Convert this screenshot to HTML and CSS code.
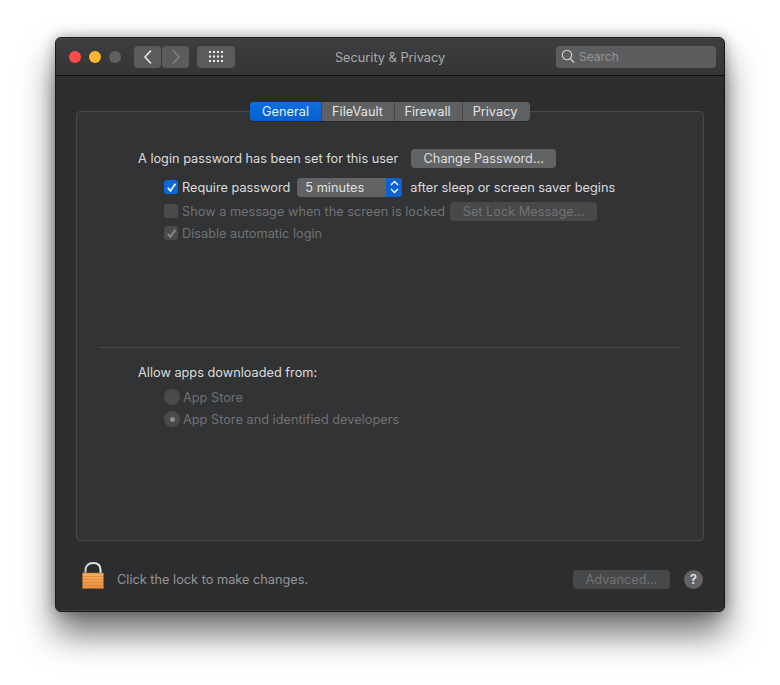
FILE: index.html
```html
<!DOCTYPE html>
<html lang="en">
<head>
<meta charset="utf-8">
<title>Security &amp; Privacy</title>
<link rel="stylesheet" href="styles.css">
</head>
<body>
<div class="window">
  <header class="titlebar">
    <div class="lights">
      <span class="light red"></span>
      <span class="light yellow"></span>
      <span class="light gray"></span>
    </div>
    <div class="nav">
      <span class="navbtn"><svg width="10" height="16" viewBox="0 0 10 16"><path d="M8 1.5 L2 8 L8 14.5" fill="none" stroke="#e8e8e8" stroke-width="1.6"/></svg></span>
      <span class="navbtn"><svg width="10" height="16" viewBox="0 0 10 16"><path d="M2 1.5 L8 8 L2 14.5" fill="none" stroke="#808082" stroke-width="1.6"/></svg></span>
    </div>
    <span class="gridbtn">
      <svg width="15" height="13" viewBox="0 0 15 13" fill="#f0f0f0">
        <rect x="0" y="0" width="2" height="2"/><rect x="4" y="0" width="2" height="2"/><rect x="8" y="0" width="2" height="2"/><rect x="12" y="0" width="2" height="2"/>
        <rect x="0" y="4.5" width="2" height="2"/><rect x="4" y="4.5" width="2" height="2"/><rect x="8" y="4.5" width="2" height="2"/><rect x="12" y="4.5" width="2" height="2"/>
        <rect x="0" y="9" width="2" height="2"/><rect x="4" y="9" width="2" height="2"/><rect x="8" y="9" width="2" height="2"/><rect x="12" y="9" width="2" height="2"/>
      </svg>
    </span>
    <h1 class="title">Security &amp; Privacy</h1>
    <div class="search">
      <svg width="14" height="15" viewBox="0 0 14 15"><circle cx="6" cy="6" r="4.7" fill="none" stroke="#d8d8d8" stroke-width="1.1"/><path d="M9.4 9.6 L13 13.6" stroke="#d8d8d8" stroke-width="1.3" fill="none"/></svg>
      <span class="search-text">Search</span>
    </div>
  </header>

  <main class="body">
    <section class="panel">
      <nav class="tabs">
        <span class="tab active">General</span>
        <span class="tab t2">FileVault</span>
        <span class="tab t3">Firewall</span>
        <span class="tab t4">Privacy</span>
      </nav>

      <div class="top">
        <div class="row row-login">
          <span class="label">A login password has been set for this user</span>
          <span class="btn btn-change">Change Password...</span>
        </div>
        <div class="row row-require">
          <span class="check on"><svg width="11" height="11" viewBox="0 0 11 11"><path d="M1.8 5.8 L4.4 8.8 L9.4 1.8" fill="none" stroke="#fff" stroke-width="1.7"/></svg></span>
          <span class="label">Require password</span>
          <span class="select">
            <span class="select-value">5 minutes</span>
            <span class="select-arrows"><svg width="9" height="14" viewBox="0 0 9 14"><path d="M1 5 L4.5 1.5 L8 5 M1 9 L4.5 12.5 L8 9" fill="none" stroke="#fff" stroke-width="1.3"/></svg></span>
          </span>
          <span class="label">after sleep or screen saver begins</span>
        </div>
        <div class="row row-message">
          <span class="check off"></span>
          <span class="label dim">Show a message when the screen is locked</span>
          <span class="btn btn-disabled btn-lockmsg">Set Lock Message...</span>
        </div>
        <div class="row row-auto">
          <span class="check off"><svg width="11" height="11" viewBox="0 0 11 11"><path d="M1.8 5.8 L4.4 8.8 L9.4 1.8" fill="none" stroke="#8b8c8e" stroke-width="1.7"/></svg></span>
          <span class="label dim">Disable automatic login</span>
        </div>
      </div>

      <hr class="divider">

      <div class="bottom">
        <div class="row"><span class="label">Allow apps downloaded from:</span></div>
        <div class="row row-radio first">
          <span class="radio"></span>
          <span class="label dim">App Store</span>
        </div>
        <div class="row row-radio">
          <span class="radio selected"></span>
          <span class="label dim">App Store and identified developers</span>
        </div>
      </div>
    </section>

    <footer class="footer">
      <svg class="lock" width="22" height="27" viewBox="0 0 22 27">
        <defs>
          <linearGradient id="shackle" x1="0" x2="1" y1="0" y2="0"><stop offset="0" stop-color="#c9d3da"/><stop offset="1" stop-color="#eef1f3"/></linearGradient>
          <linearGradient id="lockbody" x1="0" x2="0" y1="0" y2="1"><stop offset="0" stop-color="#f5b063"/><stop offset="1" stop-color="#ea8e3c"/></linearGradient>
        </defs>
        <path d="M3.5 11 V8 C3.5 3.6 6.5 1.1 11 1.1 C15.5 1.1 18.5 3.6 18.5 8 V11" fill="none" stroke="url(#shackle)" stroke-width="2"/>
        <rect x="0.5" y="11" width="21" height="15.5" fill="url(#lockbody)" stroke="#a8612a" stroke-width="0.6"/>
        <path d="M1 14.5 H21 M1 17.5 H21 M1 20.5 H21 M1 23.5 H21" stroke="#d98334" stroke-width="0.7"/>
      </svg>
      <span class="lock-text">Click the lock to make changes.</span>
      <span class="btn btn-disabled btn-advanced">Advanced...</span>
      <span class="help">?</span>
    </footer>
  </main>
</div>
</body>
</html>
```
FILE: styles.css
```css
* { box-sizing: border-box; }
html, body { margin: 0; padding: 0; }
body {
  width: 780px;
  height: 685px;
  overflow: hidden;
  background: #fff;
  font-family: Inter, "Liberation Sans", sans-serif;
  font-size: 12.75px;
  color: #dedede;
  padding: 37px 55px 0 55px;
}
.window {
  width: 670px;
  height: 575px;
  display: flex;
  flex-direction: column;
  background: #2c2d2f;
  border: 1px solid #1a1a1b;
  border-radius: 6px;
  box-shadow: 0 22px 34px rgba(0,0,0,.55), 0 0 14px rgba(0,0,0,.32), inset 0 -1px 0 #3e3f41;
  overflow: hidden;
}
.titlebar {
  height: 38px;
  flex: none;
  display: flex;
  align-items: center;
  padding: 0 8px 0 13px;
  background: linear-gradient(#3d3e40, #343537);
  border-bottom: 1px solid #0e0e0f;
  box-shadow: inset 0 1px 0 #4a4b4d;
}
.lights { display: flex; gap: 8px; width: 65px; flex: none; }
.light { width: 12px; height: 12px; border-radius: 50%; }
.red { background: #fb4c46; }
.yellow { background: #fdb631; }
.gray { background: #5f6062; }
.nav { display: flex; gap: 1px; flex: none; }
.navbtn, .gridbtn, .search { background: #5a5b5d; border-radius: 4px; height: 22px; }
.navbtn { width: 27px; display: flex; align-items: center; justify-content: center; }
.gridbtn { width: 38px; margin-left: 8px; display: flex; align-items: center; justify-content: center; flex: none; }
.gridbtn svg { margin-left: 1px; margin-top: 1px; }
.title {
  flex: 1;
  margin: 0;
  padding: 1px 11px 0 0;
  text-align: center;
  font-size: 12.75px;
  font-weight: 400;
  color: #a9aaab;
}
.search {
  width: 160px;
  flex: none;
  display: flex;
  align-items: center;
  gap: 4px;
  padding-left: 5px;
  background: #5c5d5f;
}
.search-text { color: #949596; font-size: 12px; }
.body {
  flex: 1;
  display: flex;
  flex-direction: column;
  padding: 35px 20px 0 20px;
}
.panel {
  height: 430px;
  flex: none;
  background: #323335;
  border: 1px solid #48494b;
  border-radius: 4px;
  padding-left: 61px;
}
.tabs {
  display: flex;
  width: 280px;
  height: 19px;
  margin: -10px 0 0 112px;
  border-radius: 4px;
  overflow: hidden;
  background: #5f6062;
  box-shadow: 0 1px 0 rgba(0,0,0,.2);
}
.tab {
  display: flex;
  align-items: center;
  justify-content: center;
  color: #e4e4e4;
  border-left: 1px solid #47484a;
}
.tab.active { width: 71px; border-left: none; background: linear-gradient(#0a6fe0, #0560cc); color: #e6f0fc; }
.t2 { width: 73px; padding-right: 1px; }
.t3 { width: 68px; padding-right: 2px; }
.t4 { width: 68px; padding-right: 3px; }
.top { padding-top: 27px; height: 226px; }
.row { display: flex; align-items: center; white-space: nowrap; }
.row-login { height: 20px; }
.row-require { height: 20px; margin-top: 9px; padding-left: 26px; }
.row-message { height: 20px; margin-top: 4px; padding-left: 26px; }
.row-auto { height: 20px; margin-top: 2px; padding-left: 26px; }
.label { color: #dcdcdc; }
.dim { color: #717274; }
.btn {
  display: flex;
  align-items: center;
  justify-content: center;
  height: 19px;
  border-radius: 4px;
  background: #626365;
  color: #dfdfdf;
}
.btn-change { width: 145px; margin-left: 13px; }
.btn-disabled { background: #47484a; color: #717274; }
.btn-lockmsg { width: 147px; margin-left: 5px; }
.btn-advanced { width: 97px; margin-left: auto; }
.check {
  width: 14px;
  height: 14px;
  border-radius: 3px;
  margin-right: 4px;
  display: flex;
  align-items: center;
  justify-content: center;
  flex: none;
}
.check.on { background: #0a68d8; }
.check.off { background: #4a4b4d; }
.select {
  display: flex;
  width: 105px;
  height: 19px;
  margin: 0 8px 0 7px;
  border-radius: 4px;
  overflow: hidden;
  background: #626365;
}
.select-value { flex: 1; padding-left: 8px; line-height: 19px; color: #e0e0e0; }
.select-arrows {
  width: 16px;
  background: #0a63d0;
  display: flex;
  align-items: center;
  justify-content: center;
}
.divider {
  border: none;
  height: 1px;
  margin: 0 22px 0 -39px;
  background: #47484a;
}
.bottom { padding-top: 14px; }
.bottom .row { height: 20px; }
.bottom .first { margin-top: 5px; }
.row-radio { padding-left: 26px; margin-top: 2px; }
.radio {
  width: 16px;
  height: 16px;
  border-radius: 50%;
  background: #4a4b4d;
  margin-right: 3px;
  flex: none;
  display: flex;
  align-items: center;
  justify-content: center;
}
.radio.selected::after {
  content: "";
  width: 5px;
  height: 5px;
  border-radius: 50%;
  background: #8b8c8e;
}
.footer {
  flex: 1;
  display: flex;
  align-items: center;
  padding: 10px 1px 0 6px;
  margin-top: -3px;
}
.lock { flex: none; margin-bottom: 9px; }
.lock-text { margin-left: 13px; color: #959697; }
.help {
  width: 19px;
  height: 19px;
  margin-left: 14px;
  border-radius: 50%;
  background: #626365;
  color: #e6e6e6;
  font-weight: 600;
  display: flex;
  align-items: center;
  justify-content: center;
}
```
